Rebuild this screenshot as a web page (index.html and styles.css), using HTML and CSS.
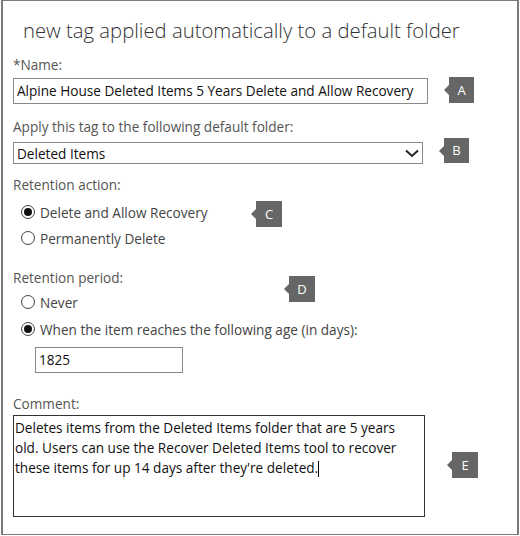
FILE: index.html
```html
<!DOCTYPE html>
<html>
<head>
<meta charset="utf-8">
<link rel="stylesheet" href="styles.css">
</head>
<body>
<div class="frame">
  <h1 class="title">new tag applied automatically to a default folder</h1>

  <div class="label lbl-name">*Name:</div>
  <div class="textbox name-box">Alpine House Deleted Items 5 Years Delete and Allow Recovery</div>

  <div class="label lbl-apply">Apply this tag to the following default folder:</div>
  <div class="select">
    <span>Deleted Items</span>
    <svg class="chev" width="14" height="9" viewBox="0 0 14 9"><polyline points="1,1.5 7,7 13,1.5" fill="none" stroke="#222" stroke-width="2"/></svg>
  </div>

  <div class="label lbl-action">Retention action:</div>
  <div class="radio-row r1"><span class="radio checked"></span><span>Delete and Allow Recovery</span></div>
  <div class="radio-row r2"><span class="radio"></span><span>Permanently Delete</span></div>

  <div class="label lbl-period">Retention period:</div>
  <div class="radio-row r3"><span class="radio"></span><span>Never</span></div>
  <div class="radio-row r4"><span class="radio checked"></span><span>When the item reaches the following age (in days):</span></div>
  <div class="textbox days-box">1825</div>

  <div class="label lbl-comment">Comment:</div>
  <div class="comment">Deletes items from the Deleted Items folder that are 5 years<br>old. Users can use the Recover Deleted Items tool to recover<br>these items for up 14 days after they're deleted.<span class="caret"></span></div>

  <span class="badge ba">A</span>
  <span class="badge bb">B</span>
  <span class="badge bc">C</span>
  <span class="badge bd">D</span>
  <span class="badge be">E</span>
</div>
</body>
</html>
```
FILE: styles.css
```css
html, body {
  margin: 0;
  padding: 0;
  background: #fff;
}

.frame {
  position: relative;
  margin-left: 1px;
  width: 518px;
  height: 535px;
  box-sizing: border-box;
  border: 1px solid #7a7a7a;
  border-left-width: 2px;
  border-right-width: 2px;
  padding-left: 10px;
  display: flex;
  flex-direction: column;
  align-items: flex-start;
  font-family: "Open Sans", "Noto Sans", sans-serif;
  font-size: 13.6px;
  color: #222;
}

.title {
  margin: 16px 0 0 10px;
  font-size: 20.3px;
  font-weight: 300;
  line-height: 26px;
  color: #333;
  white-space: nowrap;
}

.label {
  color: #555;
  line-height: 16px;
  white-space: nowrap;
}

.lbl-name { margin-top: 14px; }
.lbl-apply { margin-top: 15px; }
.lbl-action { margin-top: 13px; }
.lbl-period { margin-top: 22px; }
.lbl-comment { margin-top: 23px; }

.textbox {
  box-sizing: border-box;
  border: 1px solid #8a8a8a;
  height: 26px;
  line-height: 24px;
  padding: 0 3px;
  color: #111;
  white-space: nowrap;
  overflow: hidden;
}

.name-box {
  margin-top: 5px;
  width: 415px;
}

.select {
  margin-top: 7px;
  box-sizing: border-box;
  width: 410px;
  height: 22px;
  border: 1px solid #8a8a8a;
  padding: 0 3px 0 3px;
  display: flex;
  align-items: center;
  justify-content: space-between;
  color: #111;
}

.radio-row {
  height: 20px;
  display: flex;
  align-items: center;
  gap: 5px;
  padding-left: 8px;
  color: #444;
  white-space: nowrap;
}

.r1 { margin-top: 9px; }
.r2 { margin-top: 6px; }
.r3 { margin-top: 6px; }
.r4 { margin-top: 7px; }

.radio {
  box-sizing: border-box;
  width: 14px;
  height: 14px;
  border: 1px solid #444;
  border-radius: 50%;
  display: flex;
  align-items: center;
  justify-content: center;
  flex: none;
}

.radio.checked::after {
  content: "";
  width: 8px;
  height: 8px;
  border-radius: 50%;
  background: #111;
}

.days-box {
  margin-top: 8px;
  margin-left: 22px;
  width: 148px;
}

.comment {
  margin-top: 3px;
  box-sizing: border-box;
  width: 412px;
  height: 102px;
  border: 1px solid #333;
  padding: 2px 1px;
  line-height: 20px;
  color: #111;
  white-space: nowrap;
}

.caret {
  display: inline-block;
  width: 1px;
  height: 16px;
  background: #000;
  vertical-align: -4px;
}

.badge {
  position: absolute;
  width: 26px;
  height: 26px;
  background: #666;
  color: #fff;
  font-size: 13px;
  line-height: 26px;
  text-align: center;
}

.badge::before {
  content: "";
  position: absolute;
  left: -5px;
  top: 8px;
  border-top: 5px solid transparent;
  border-bottom: 5px solid transparent;
  border-right: 5px solid #666;
}

.ba { left: 446px; top: 76px; width: 25px; }
.bb { left: 441px; top: 137px; width: 25px; height: 25px; line-height: 25px; }
.bc { left: 253px; top: 200px; }
.bd { left: 286px; top: 275px; }
.be { left: 449px; top: 451px; }
```
